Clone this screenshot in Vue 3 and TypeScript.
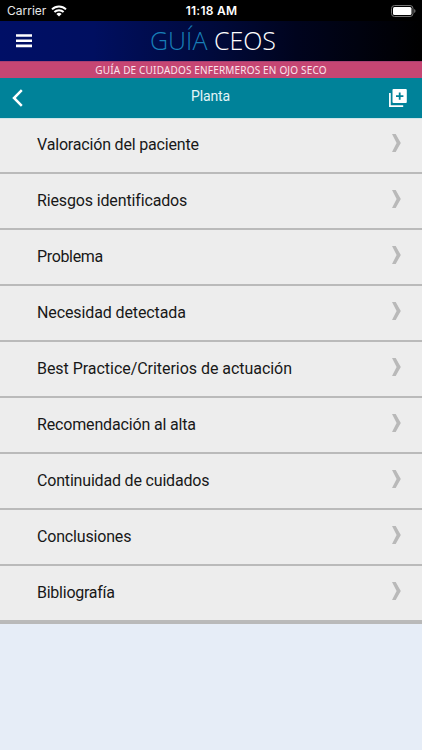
<script setup lang="ts">
interface Section {
  label: string
  spacing: number
}

const sections: Section[] = [
  { label: 'Valoración del paciente', spacing: -0.18 },
  { label: 'Riesgos identificados', spacing: -0.14 },
  { label: 'Problema', spacing: -0.34 },
  { label: 'Necesidad detectada', spacing: -0.11 },
  { label: 'Best Practice/Criterios de actuación', spacing: -0.04 },
  { label: 'Recomendación al alta', spacing: -0.16 },
  { label: 'Continuidad de cuidados', spacing: -0.18 },
  { label: 'Conclusiones', spacing: -0.17 },
  { label: 'Bibliografía', spacing: -0.25 },
]
</script>

<template>
  <div class="screen">
    <div class="status">
      <div class="carrier">
        <span>Carrier</span>
        <svg class="wifi" width="16" height="12" viewBox="0 0 16 12">
          <path d="M1 4.4a10 10 0 0 1 14 0M3.4 7a6.6 6.6 0 0 1 9.2 0" fill="none" stroke="#fff" stroke-width="2" />
          <path d="M8 11.6 5.4 9a3.7 3.7 0 0 1 5.2 0z" fill="#fff" />
        </svg>
      </div>
      <span class="time">11:18 AM</span>
      <svg class="battery" width="25" height="12" viewBox="0 0 25 12">
        <rect x=".5" y=".5" width="21.5" height="11" rx="3" fill="none" stroke="#777" />
        <rect x="2" y="2" width="18.5" height="8" rx="1.5" fill="#fff" />
        <path d="M23.2 4v4q1.3-.6 1.3-2t-1.3-2z" fill="#777" />
      </svg>
    </div>
    <header class="brand">
      <svg class="menu" width="16" height="14" viewBox="0 0 16 14">
        <path d="M0 1.5h16M0 6.7h16M0 11.9h16" stroke="#fff" stroke-width="2.6" />
      </svg>
      <h1><span>GUÍA</span> CEOS</h1>
    </header>
    <div class="subtitle"><span>GUÍA DE CUIDADOS ENFERMEROS EN OJO SECO</span></div>
    <nav class="toolbar">
      <svg class="back" width="11" height="18" viewBox="0 0 11 18">
        <path d="M9.8 1.2 2 9l7.8 7.8" fill="none" stroke="#fff" stroke-width="2.5" />
      </svg>
      <h2>Planta</h2>
      <svg class="add" width="18" height="18" viewBox="0 0 18 18">
        <path d="M.9 4v13.1h13.3" fill="none" stroke="#fff" stroke-width="1.7" />
        <rect x="3.5" y="0" width="14.3" height="14" rx="1" fill="#fff" />
        <path d="M10.7 3.4v7.4M7 7.1h7.4" stroke="#008299" stroke-width="1.8" />
      </svg>
    </nav>
    <ul class="list">
      <li v-for="s in sections" :key="s.label">
        <span :style="{ letterSpacing: s.spacing + 'px' }">{{ s.label }}</span>
        <svg width="9" height="18" viewBox="0 0 9 18">
          <path d="M0 0h3.7L8.8 9 3.7 18H0l4.6-9z" fill="#b9b9b9" />
        </svg>
      </li>
    </ul>
  </div>
</template>

<style>
body {
  background: #e6edf7;
}
</style>

<style scoped>
.screen {
  width: 422px;
  height: 750px;
  overflow: hidden;
  background: #e6edf7;
  font-family: Roboto, sans-serif;
}
.status {
  display: grid;
  grid-template-columns: 1fr auto 1fr;
  align-items: center;
  height: 21px;
  box-sizing: border-box;
  padding: 1px 6px 0 7px;
  background: #000;
  color: #fff;
  font: 12px/20px Inter, sans-serif;
}
.carrier {
  display: flex;
  align-items: center;
  gap: 5px;
  color: #e8e8e8;
}
.time {
  font-weight: 600;
  letter-spacing: 0.25px;
}
.battery {
  justify-self: end;
}
.brand {
  display: grid;
  grid-template-columns: 1fr auto 1fr;
  align-items: center;
  height: 40px;
  padding: 0 12px 0 16px;
  background: linear-gradient(90deg, #000f66 0%, #000f60 22%, #000a3c 50%, #00041e 70%, #000 100%);
}
h1,
h2 {
  margin: 0;
}
h1 {
  padding-bottom: 2px;
  color: #fff;
  font: 300 25px/38px "Open Sans", sans-serif;
}
h1 span {
  color: #187fb8;
}
.subtitle {
  height: 17px;
  box-sizing: border-box;
  border-top: 1px solid #a83e71;
  background: #c64673;
  color: #fae4ec;
  text-align: center;
  font: 10px/16px "Noto Sans", sans-serif;
  letter-spacing: 0.17px;
}
.toolbar {
  display: grid;
  grid-template-columns: 1fr auto 1fr;
  align-items: center;
  height: 40px;
  box-sizing: border-box;
  padding: 0 15px 0 12px;
  background: #008299;
}
.toolbar h2 {
  padding: 0 0 5px 2px;
  color: #e2f5f8;
  font: 400 14px/20px Roboto, sans-serif;
  letter-spacing: -0.1px;
}
.add {
  justify-self: end;
}
.list {
  margin: 0;
  padding: 0;
  list-style: none;
  border-bottom: 2px solid #b9b9b9;
}
.list li {
  display: flex;
  align-items: center;
  justify-content: space-between;
  height: 56px;
  box-sizing: border-box;
  padding: 0 21px 4px 37px;
  border-bottom: 2px solid #bababa;
  background: #ededed;
  color: #181818;
  font-size: 16px;
  white-space: nowrap;
}
.list li:first-child {
  box-shadow: inset 0 1px #cfe4e8;
}
.list li span {
  padding-top: 2px;
}
</style>
